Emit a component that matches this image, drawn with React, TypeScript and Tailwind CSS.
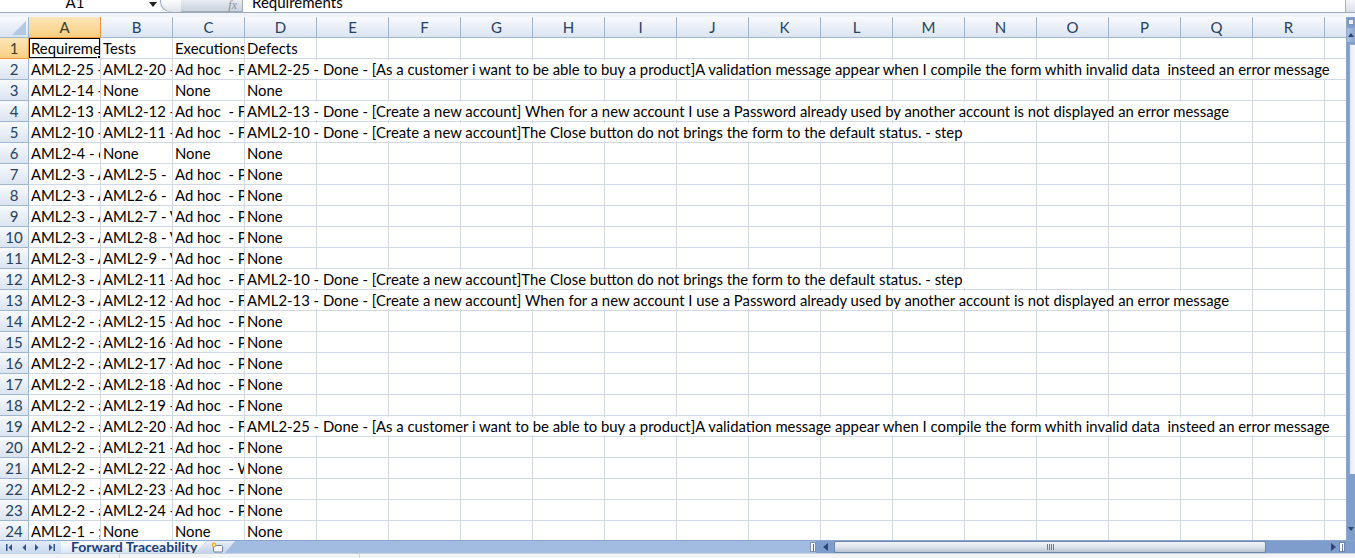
import React from "react";

const FONT = "font-['Lato','Liberation_Sans',sans-serif]";

const D25 =
  "AML2-25 - Done - [As a customer i want to be able to buy a product]A validation message appear when I compile the form whith invalid data  insteed an error message";
const D13 =
  "AML2-13 - Done - [Create a new account] When for a new account I use a Password already used by another account is not displayed an error message";
const D10 =
  "AML2-10 - Done - [Create a new account]The Close button do not brings the form to the default status. - step";

const FAIL = "Ad hoc  - Failed";
const PASS = "Ad hoc  - Passed";
const A3 = "AML2-3 - As a user i want to manage my account";
const A2 = "AML2-2 - as a customer i want to add a product to cart";

const rows: [string, string, string, string][] = [
  ["Requirements", "Tests", "Executions", "Defects"],
  ["AML2-25 - As a customer i want to be able to buy a product", "AML2-20 - Validation of the form", FAIL, D25],
  ["AML2-14 - Checkout", "None", "None", "None"],
  ["AML2-13 - Create a new account", "AML2-12 - Password check", FAIL, D13],
  ["AML2-10 - Create a new account", "AML2-11 - Close button", FAIL, D10],
  ["AML2-4 - change password", "None", "None", "None"],
  [A3, "AML2-5 -  login", PASS, "None"],
  [A3, "AML2-6 -  logout", PASS, "None"],
  [A3, "AML2-7 - Verify email", PASS, "None"],
  [A3, "AML2-8 - Verify phone", PASS, "None"],
  [A3, "AML2-9 - Verify address", PASS, "None"],
  [A3, "AML2-11 - Close button", FAIL, D10],
  [A3, "AML2-12 - Password check", FAIL, D13],
  [A2, "AML2-15 - Add item", PASS, "None"],
  [A2, "AML2-16 - Remove item", PASS, "None"],
  [A2, "AML2-17 - Update quantity", PASS, "None"],
  [A2, "AML2-18 - Empty cart", PASS, "None"],
  [A2, "AML2-19 - Cart total", PASS, "None"],
  [A2, "AML2-20 - Validation of the form", FAIL, D25],
  [A2, "AML2-21 - Payment", PASS, "None"],
  [A2, "AML2-22 - Shipping", "Ad hoc  - WIP", "None"],
  [A2, "AML2-23 - Discount code", PASS, "None"],
  [A2, "AML2-24 - Order summary", PASS, "None"],
  ["AML2-1 - ; Search products", "None", "None", "None"],
];

const letters = "ABCDEFGHIJKLMNOPQR".split("");

const headerBg = "bg-gradient-to-b from-[#f8fafd] to-[#dbe4f1]";
const activeBg = "bg-gradient-to-b from-[#fce6b8] to-[#f8cf82]";

const ColumnHeader = () => (
  <div className="flex h-[21px] shrink-0">
    <div className={`w-[29px] shrink-0 border-r border-b border-[#9eb6ce] ${headerBg} flex items-end justify-end p-[2px]`}>
      <svg width="14" height="14" viewBox="0 0 14 14">
        <polygon points="14,0 14,14 0,14" fill="#b4c8e2" />
      </svg>
    </div>
    {letters.map((l, i) => (
      <div
        key={l}
        className={`w-[72px] shrink-0 border-r border-b text-center leading-[20px] text-[15px] ${
          i === 0 ? `${activeBg} border-[#f29536] text-[#3b3b2a]` : `${headerBg} border-[#9eb6ce] text-[#27415f]`
        }`}
      >
        {l}
      </div>
    ))}
    <div className={`flex-1 border-b border-[#9eb6ce] ${headerBg}`} />
  </div>
);

const Row = ({ n, cells }: { n: number; cells: [string, string, string, string] }) => {
  const active = n === 1;
  return (
    <div className="flex h-[21px] shrink-0">
      <div
        className={`w-[29px] shrink-0 border-r border-b text-center leading-[20px] text-[15px] ${
          active ? `${activeBg} border-[#f29536] text-[#3b3b2a]` : `${headerBg} border-[#9eb6ce] text-[#27415f]`
        }`}
      >
        {n}
      </div>
      {cells.map((c, i) => {
        const overflow = i === 3;
        return (
          <div
            key={i}
            className={`relative w-[72px] shrink-0 border-r border-b border-[#d0d7e5] leading-[20px] text-[14.85px] text-black whitespace-pre ${
              overflow ? "overflow-visible z-10" : "overflow-hidden"
            }`}
          >
            <span className={`pl-[2px] ${overflow ? "bg-white pr-[2px]" : ""}`}>{c}</span>
            {active && i === 0 && (
              <div className="absolute -left-[1px] -top-[1px] w-[73px] h-[22px] border-2 border-black pointer-events-none">
                <div className="absolute -right-[4px] -bottom-[4px] w-[6px] h-[6px] bg-black border border-white" />
              </div>
            )}
          </div>
        );
      })}
      {letters.slice(4).map((l) => (
        <div key={l} className="w-[72px] shrink-0 border-r border-b border-[#d0d7e5]" />
      ))}
      <div className="flex-1 border-b border-[#d0d7e5]" />
    </div>
  );
};

const FormulaBar = () => (
  <div className="h-[13px] shrink-0 flex border-b border-[#9aa8bb] bg-white overflow-hidden">
    <div className="w-[146px] shrink-0 bg-white -mt-[8px] h-[20px] leading-[20px] text-center text-[15px] pl-[4px]">
      A1
    </div>
    <div className="w-[14px] shrink-0 flex justify-center pt-[2px]">
      <svg width="8" height="5" viewBox="0 0 8 5">
        <polygon points="0,0 8,0 4,5" fill="#222" />
      </svg>
    </div>
    <div className="w-[82px] shrink-0 flex items-stretch rounded-bl-[10px] bg-gradient-to-b from-[#e9edf3] to-[#c9d1dc] border-b border-l border-[#a3adbb] relative">
      <div className="w-[20px] h-[12px] rounded-bl-full bg-gradient-to-b from-[#fdfdfe] to-[#dfe4ea]" />
      <div className="flex-1" />
      <span className="italic font-['Liberation_Serif',serif] text-[12px] leading-[10px] text-[#8a8f96] pr-[5px]">fx</span>
    </div>
    <div className="flex-1 border-l border-[#a3adbb] bg-white -mt-[8px] h-[20px] leading-[20px] text-[15px] pl-[9px]">
      Requirements
    </div>
    <div className="w-[10px] shrink-0 border-l border-[#a3adbb] bg-gradient-to-b from-[#f4f6f9] to-[#d9dfe8]" />
  </div>
);

const VScroll = () => (
  <div className="w-[9px] shrink-0 flex flex-col bg-[#7f9ecd] border-l border-[#8fa7c9]">
    <div className="h-[6px] mt-[2px] mx-[1px] border border-[#7f93b1] bg-[#eef2f8]" />
    <div className="h-[14px] mt-[3px] bg-gradient-to-r from-[#a9bedf] to-[#8aa6d2] flex items-center justify-center">
      <svg width="6" height="4" viewBox="0 0 6 4">
        <polygon points="3,0 6,4 0,4" fill="#304870" />
      </svg>
    </div>
    <div className="h-[430px] mt-[2px] ml-[2px] bg-gradient-to-r from-[#e4e9f0] to-[#f6f8fb] border-l border-t border-[#94a8c6]" />
    <div className="flex-1" />
    <div className="h-[14px] mb-[4px] flex items-center justify-center">
      <svg width="6" height="4" viewBox="0 0 6 4">
        <polygon points="0,0 6,0 3,4" fill="#304870" />
      </svg>
    </div>
  </div>
);

const NavArrow = ({ dir, bar }: { dir: "l" | "r"; bar?: boolean }) => (
  <svg width="9" height="9" viewBox="0 0 9 9">
    {dir === "l" ? (
      <>
        {bar && <rect x="1" y="1" width="1.5" height="7" fill="#2e5391" />}
        <polygon points="7,1 7,8 3.5,4.5" fill="#2e5391" />
      </>
    ) : (
      <>
        <polygon points="2,1 2,8 5.5,4.5" fill="#2e5391" />
        {bar && <rect x="6.5" y="1" width="1.5" height="7" fill="#2e5391" />}
      </>
    )}
  </svg>
);

const TabBar = () => (
  <div className="h-[13px] shrink-0 flex bg-[#a2bbe0] border-t border-[#8aa5cf]">
    <div className="w-[62px] shrink-0 flex items-center justify-around px-[2px] bg-gradient-to-b from-[#e3ecf8] to-[#c8d8ef] border-r border-[#8aa5cf]">
      <NavArrow dir="l" bar />
      <NavArrow dir="l" />
      <NavArrow dir="r" />
      <NavArrow dir="r" bar />
    </div>
    <div className="w-[146px] shrink-0 -ml-[1px] bg-gradient-to-b from-[#ffffff] to-[#dbe6f5] [clip-path:polygon(0_0,100%_0,92%_100%,0_100%)] flex items-center pl-[10px]">
      <span className="font-bold text-[14px] leading-[12px] text-[#1d3e77] whitespace-nowrap">Forward Traceability</span>
    </div>
    <div className="w-[40px] shrink-0 -ml-[12px] bg-gradient-to-b from-[#e8eef8] to-[#c4d3eb] [clip-path:polygon(30%_0,100%_0,75%_100%,0_100%)] flex items-center pl-[15px]">
      <svg width="14" height="11" viewBox="0 0 14 11">
        <rect x="3.5" y="3.5" width="9" height="6.5" rx="1" fill="#f7f9fc" stroke="#6a7f9f" />
        <circle cx="4" cy="3" r="2.4" fill="#f2b02c" />
        <circle cx="4" cy="3" r="1" fill="#fff3c4" />
      </svg>
    </div>
    <div className="flex-1" />
    <div className="w-[6px] shrink-0 border border-[#7f93b1] bg-[#f3f6fa] my-[1px] flex items-center justify-center">
      <div className="w-px h-[7px] bg-[#5d6f8c]" />
    </div>
    <div className="w-[530px] shrink-0 flex bg-[#7e9dcc]">
      <div className="w-[18px] shrink-0 flex items-center justify-center">
        <svg width="5" height="8" viewBox="0 0 5 8">
          <polygon points="5,0 5,8 0,4" fill="#2f4670" />
        </svg>
      </div>
      <div className="w-[432px] shrink-0 rounded-[2px] border border-[#6d86ac] bg-gradient-to-b from-[#f2f4f7] via-[#dfe5ec] to-[#b7c3d3] flex items-center justify-center">
        <div className="flex gap-[1px]">
          <div className="w-px h-[6px] bg-[#6c7c93]" />
          <div className="w-px h-[6px] bg-[#6c7c93]" />
          <div className="w-px h-[6px] bg-[#6c7c93]" />
          <div className="w-px h-[6px] bg-[#6c7c93]" />
        </div>
      </div>
      <div className="flex-1" />
      <div className="w-[10px] shrink-0 flex items-center justify-center">
        <svg width="5" height="8" viewBox="0 0 5 8">
          <polygon points="0,0 5,4 0,8" fill="#2f4670" />
        </svg>
      </div>
      <div className="w-[6px] shrink-0 mx-[1px] my-[1px] border border-[#6d86ac] bg-white flex items-center justify-center">
        <div className="w-px h-[7px] bg-[#6c7c93]" />
      </div>
    </div>
    <div className="w-[9px] shrink-0 bg-[#7e9dcc]" />
  </div>
);

export default function App() {
  return (
    <div className={`w-[1355px] h-[558px] overflow-hidden flex flex-col bg-white ${FONT}`}>
      <FormulaBar />
      <div className="h-[4px] shrink-0 bg-[#f1f4f9]" />
      <div className="h-[523px] shrink-0 flex overflow-hidden">
        <div className="flex-1 flex flex-col overflow-hidden">
          <ColumnHeader />
          {rows.map((r, i) => (
            <Row key={i} n={i + 1} cells={r} />
          ))}
        </div>
        <VScroll />
      </div>
      <TabBar />
      <div className="flex-1 flex bg-[#f3f4f6] border-t border-[#c9d2df]">
        <div className="w-[120px] border-r border-[#d2d7de]" />
        <div className="w-[240px] border-r border-[#d2d7de]" />
        <div className="flex-1" />
      </div>
    </div>
  );
}
